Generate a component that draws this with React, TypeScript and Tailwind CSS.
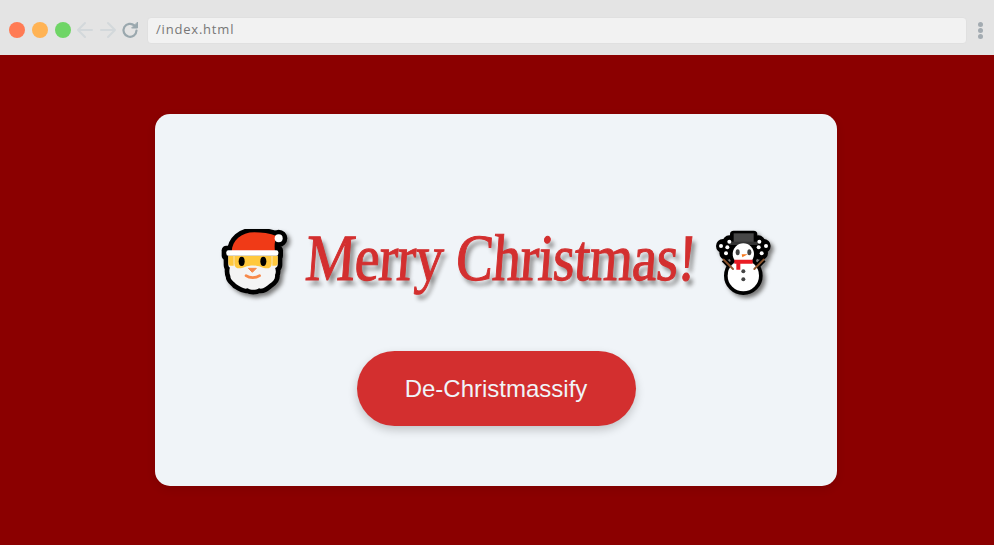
function BrowserBar() {
  return (
    <div className="flex h-[55px] items-center bg-[#e4e4e4] pl-[9px] pr-[9px] pt-[5px]">
      {/* traffic lights */}
      <div className="flex items-center gap-[7px]">
        <div className="h-[16px] w-[16px] rounded-full bg-[#ff7b54]" />
        <div className="h-[16px] w-[16px] rounded-full bg-[#ffb354]" />
        <div className="h-[16px] w-[16px] rounded-full bg-[#6fd566]" />
      </div>
      {/* nav icons */}
      <svg className="ml-[5px] h-[20px] w-[64px]" viewBox="0 0 64 20" fill="none" strokeLinecap="round" strokeLinejoin="round">
        <path d="M2 10H16M9 3L2 10L9 17" stroke="#d3d8db" strokeWidth="2" />
        <path d="M25 10H39M32 3L39 10L32 17" stroke="#d3d8db" strokeWidth="2" />
        <path d="M60.5 10.5A6.5 6.5 0 1 1 58.5 5.6" stroke="#9aa8ae" strokeWidth="2.2" />
        <path d="M61.5 2.5V8H56Z" fill="#9aa8ae" stroke="#9aa8ae" strokeWidth="1" />
      </svg>
      {/* address bar */}
      <div className="ml-[7px] flex h-[27px] w-[820px] items-center rounded-[4px] border border-[#e0e0e0] bg-[#f2f2f2] pl-[8px] font-['Open_Sans',sans-serif] text-[13px] tracking-[0.8px] text-[#777777]">
        /index.html
      </div>
      <div className="ml-[11px] flex flex-col gap-[1px]">
        <div className="h-[5px] w-[5px] rounded-full bg-[#a3abb1]" />
        <div className="h-[5px] w-[5px] rounded-full bg-[#a3abb1]" />
        <div className="h-[5px] w-[5px] rounded-full bg-[#a3abb1]" />
      </div>
    </div>
  );
}

function Santa() {
  const hat = "M62 92C64 58 90 34 130 34C152 34 176 36 198 46C190 60 190 76 192 92Z";
  const beard =
    "M62 125C56 140 52 150 58 165C58 178 70 182 76 190C88 196 96 206 110 202C120 208 134 208 144 202C156 206 166 196 176 188C186 182 194 174 192 162C198 150 192 138 186 125Z";
  const face = "M52 104H200V132C200 140 190 144 182 140H70C60 144 52 140 52 132Z";
  return (
    <svg className="h-[68px] w-[70px] shrink-0 drop-shadow-[3px_3px_2px_#777777]" viewBox="30 24 210 204">
      {/* black silhouette */}
      <g fill="#000000" stroke="#000000" strokeWidth="28" strokeLinejoin="round">
        <path d={hat} />
        <path d={beard} />
        <path d={face} />
        <rect x="46" y="88" width="156" height="16" />
        <circle cx="203" cy="52" r="12" />
      </g>
      <path d={beard} fill="#f4f4f4" />
      <path d={face} fill="#f4f4f4" />
      <path d="M52 104H68V134H58C54 134 52 130 52 126Z" fill="#ffc83d" />
      <path d="M184 104H200V126C200 130 198 134 194 134H184Z" fill="#ffc83d" />
      <path d="M70 104H182V128C182 142 168 146 150 138C136 132 116 132 102 138C84 146 70 142 70 128Z" fill="#ffc83d" />
      <path d={hat} fill="#f03a17" />
      <rect x="46" y="88" width="156" height="16" rx="6" fill="#ffffff" />
      <circle cx="203" cy="52" r="12" fill="#ffffff" />
      <ellipse cx="92" cy="121" rx="9" ry="14" fill="#000000" />
      <ellipse cx="157" cy="121" rx="9" ry="14" fill="#000000" />
      <path d="M112 142H136L124 154Z" fill="#f7894a" stroke="#f7894a" strokeWidth="3" strokeLinejoin="round" />
      <path d="M105 164C116 172 134 172 146 164" fill="none" stroke="#f7894a" strokeWidth="8" strokeLinecap="round" />
    </svg>
  );
}

function Snowman() {
  return (
    <svg className="h-[68px] w-[58px] shrink-0 drop-shadow-[3px_3px_2px_#777777]" viewBox="36 20 174 204">
      {/* black silhouette */}
      <g fill="#000000" stroke="#000000" strokeWidth="22" strokeLinejoin="round">
        <rect x="98" y="36" width="60" height="30" />
        <circle cx="127" cy="95" r="32" />
        <circle cx="127" cy="160" r="47" />
        <circle cx="66" cy="71" r="10" />
        <circle cx="85" cy="60" r="10" />
        <circle cx="76" cy="92" r="10" />
        <circle cx="188" cy="71" r="10" />
        <circle cx="172" cy="60" r="10" />
        <circle cx="180" cy="92" r="10" />
        <path d="M68 112L96 140M188 112L160 140" strokeWidth="16" />
      </g>
      <rect x="98" y="33" width="60" height="28" fill="#474747" />
      <rect x="86" y="58" width="84" height="10" fill="#333333" />
      <circle cx="127" cy="95" r="32" fill="#ffffff" />
      <circle cx="127" cy="160" r="47" fill="#ffffff" />
      <ellipse cx="110" cy="90" rx="6" ry="9" fill="#444444" />
      <ellipse cx="145" cy="90" rx="6" ry="9" fill="#444444" />
      <path d="M122 96H140L124 105Z" fill="#f7791e" />
      <path d="M100 112H155V124H118V142H106V124H100Z" fill="#ea1c24" />
      <circle cx="127" cy="147" r="6" fill="#444444" />
      <circle cx="127" cy="171" r="6" fill="#444444" />
      <path d="M68 112L96 140" stroke="#8e562e" strokeWidth="6" fill="none" strokeLinecap="round" />
      <path d="M188 112L160 140" stroke="#8e562e" strokeWidth="6" fill="none" strokeLinecap="round" />
      <g fill="#ffffff">
        <circle cx="60" cy="71" r="6" />
        <circle cx="85" cy="58" r="6" />
        <circle cx="79" cy="75" r="6" />
        <circle cx="75" cy="93" r="6" />
        <circle cx="175" cy="58" r="6" />
        <circle cx="195" cy="71" r="6" />
        <circle cx="173" cy="75" r="6" />
        <circle cx="182" cy="93" r="6" />
      </g>
    </svg>
  );
}

export default function App() {
  return (
    <div className="flex h-[545px] w-[994px] flex-col overflow-hidden bg-[#8b0000]">
      <BrowserBar />
      <main className="flex flex-1 items-center justify-center pr-[2px]">
        <section className="flex h-[372px] w-[682px] flex-col items-center rounded-[15px] bg-[#f0f4f8] pt-[114px] shadow-[0_3px_10px_rgba(0,0,0,0.1)]">
          {/* Title row */}
          <div className="flex h-[70px] items-center">
            <Santa />
            <h1 className="mb-[10px] ml-[15px] mr-[17px] -skew-x-[5deg] scale-y-[1.18] whitespace-nowrap font-['Liberation_Serif',serif] text-[56px] font-normal leading-none tracking-[-0.6px] text-[#d32f2f] [-webkit-text-stroke:0.9px_#d32f2f] [text-shadow:4px_4px_4px_#888888]">
              Merry Christmas!
            </h1>
            <Snowman />
          </div>
          {/* Button */}
          <button className="mt-[53px] h-[75px] w-[279px] rounded-[38px] bg-[#d32f2f] font-['Liberation_Sans',sans-serif] text-[24px] text-[#f0f4f8] shadow-[0_4px_10px_rgba(0,0,0,0.2)]">
            De-Christmassify
          </button>
        </section>
      </main>
    </div>
  );
}
